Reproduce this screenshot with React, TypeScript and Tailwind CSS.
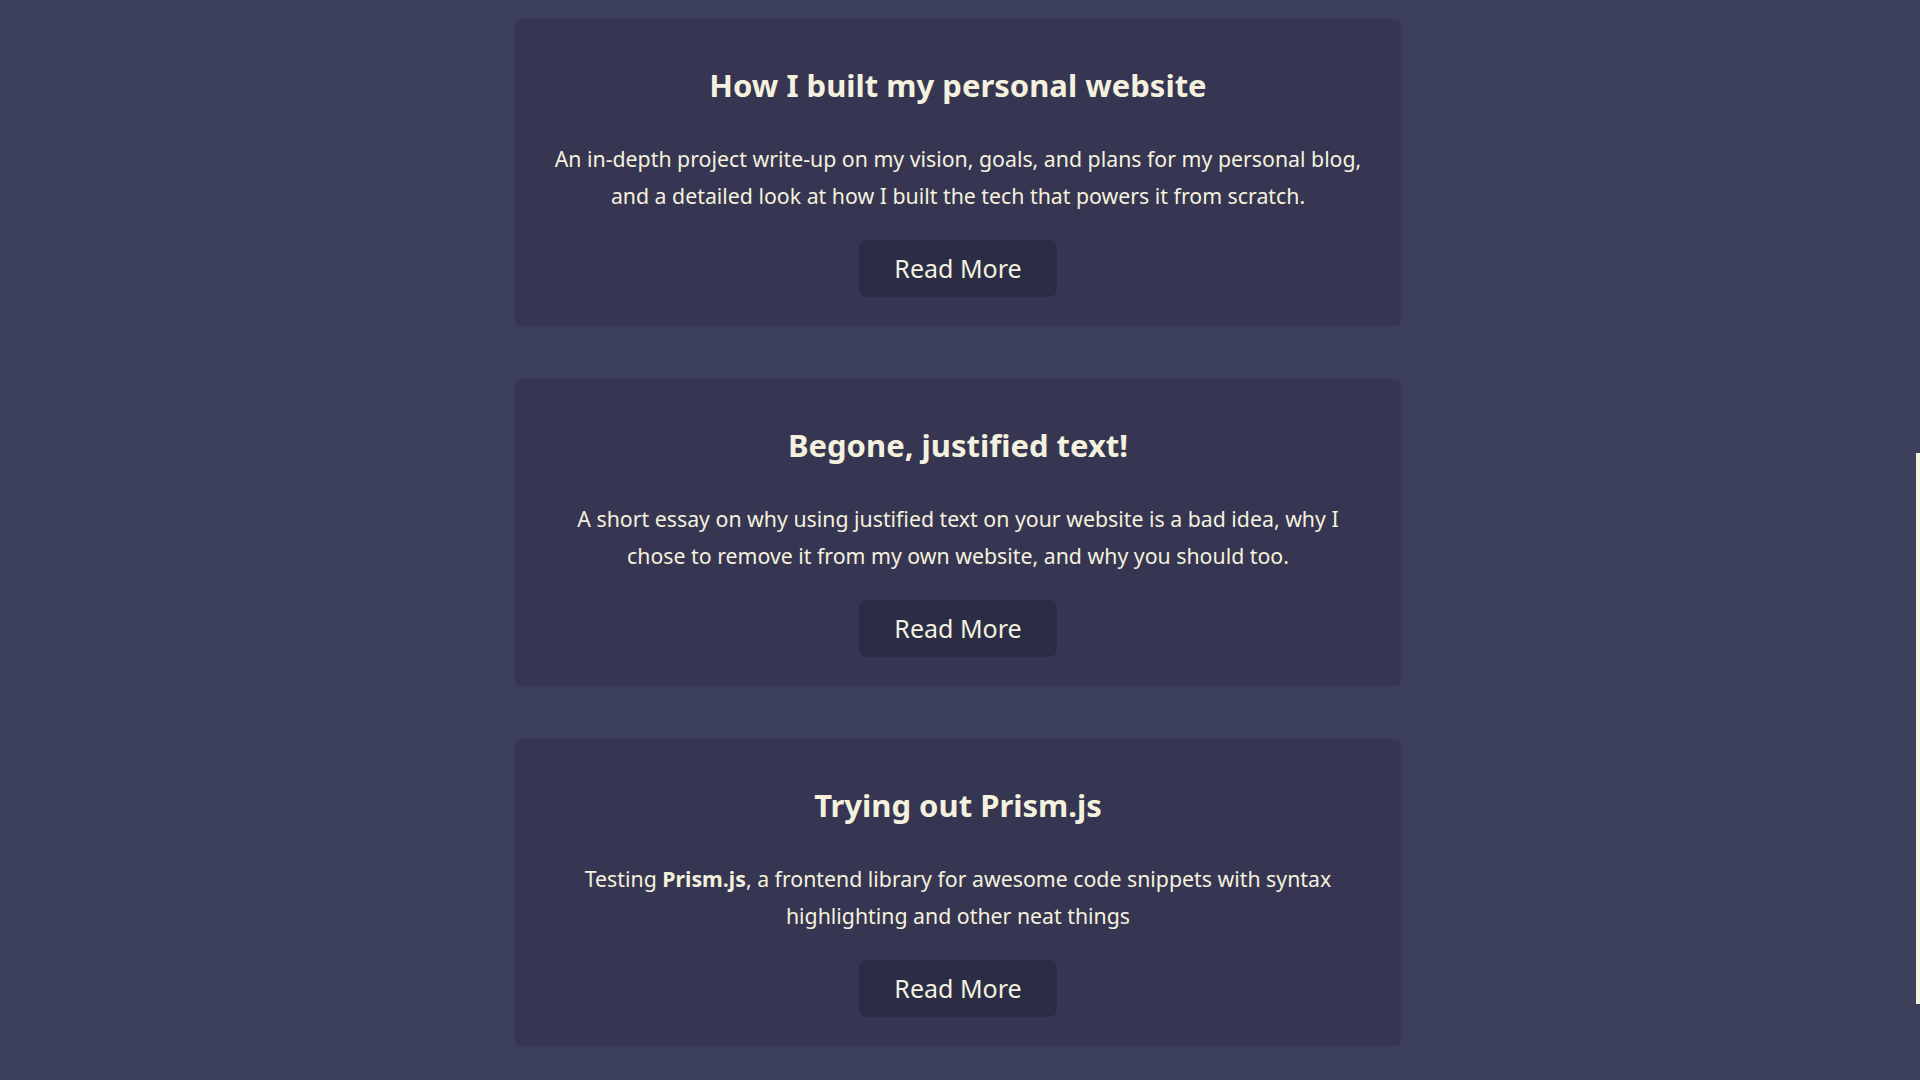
const POSTS = [
  {
    title: 'How I built my personal website',
    body: (
      <>
        An in-depth project write-up on my vision, goals, and plans for my personal blog, and a detailed look at
        how I built the tech that powers it from scratch.
      </>
    ),
  },
  {
    title: 'Begone, justified text!',
    body: (
      <>
        A short essay on why using justified text on your website is a bad idea, why I chose to remove it from my
        own website, and why you should too.
      </>
    ),
  },
  {
    title: 'Trying out Prism.js',
    body: (
      <>
        Testing <strong className="font-bold">Prism.js</strong>, a frontend library for awesome code snippets with
        syntax highlighting and other neat things
      </>
    ),
  },
];

export default function App() {
  return (
    <div
      className="min-h-screen bg-[#3d405b] text-[#f4f1de] pt-[19px] pb-[40px] pr-[4px]"
      style={{ fontFamily: '"Noto Sans", "Open Sans", sans-serif' }}
    >
      <div className="w-[886px] mx-auto flex flex-col gap-[54px]">
        {POSTS.map((post, i) => (
          <article
            key={i}
            className="h-[306px] bg-[#363652] rounded-md shadow-sm px-[38px] pt-[46px] flex flex-col items-center text-center"
          >
            <h2 className="text-[31px] leading-[40px] font-bold">{post.title}</h2>
            <p className="mt-[35px] text-[21.3px] leading-[37px]">{post.body}</p>
            <button className="mt-[26px] w-[198px] h-[57px] rounded-lg bg-[#2b2d47] text-[25px]">
              Read More
            </button>
          </article>
        ))}
      </div>
      <div className="fixed right-0 top-[453px] w-[4px] h-[551px] bg-[#f4f1de]" />
    </div>
  );
}
